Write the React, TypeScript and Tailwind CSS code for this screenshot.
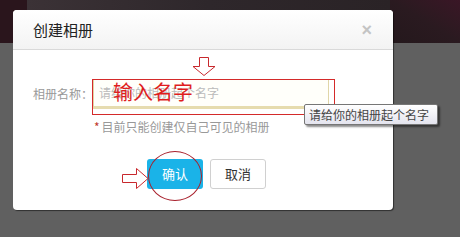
import React from "react";

const cjk = { fontFamily: '"Noto Sans CJK SC", "Liberation Sans", sans-serif' };

// 背景ページ（暗い上帯 + グレーのマスク）
function Backdrop() {
  return (
    <div className="flex h-[237px] w-[460px] flex-col">
      <div className="flex h-[43px] w-full">
        <div className="h-full w-[27px] bg-[#2a151c]" />
        <div className="h-full flex-1 bg-gradient-to-r from-[#3b3236] via-[#2e272b] to-[#2a2326]" />
        <div className="h-full w-[70px] bg-gradient-to-bl from-[#3a1626] via-[#2a1a20] to-[#24181c]" />
      </div>
      <div className="w-full flex-1 bg-[#606060]" />
    </div>
  );
}

function DownArrow() {
  return (
    <svg width="24" height="19" viewBox="0 0 24 19" className="absolute left-[192px] top-[57px]">
      <path d="M7.5 0.5 H16.5 V9.5 H23 L12 18.5 L1 9.5 H7.5 Z" fill="#fff" stroke="#c8282d" strokeWidth="1" />
    </svg>
  );
}

function RightArrow() {
  return (
    <svg width="27" height="21" viewBox="0 0 27 21" className="absolute left-[122px] top-[168px]">
      <path d="M0.5 6.5 H14.5 V0.5 L26 10.5 L14.5 20.5 V14.5 H0.5 Z" fill="#fff" stroke="#c8282d" strokeWidth="1" />
    </svg>
  );
}

export default function App() {
  return (
    <div className="relative h-[237px] w-[460px] overflow-hidden" style={cjk}>
      <Backdrop />

      {/* ダイアログ */}
      <div className="absolute left-[13px] top-[10px] flex h-[200px] w-[380px] flex-col rounded-[4px] bg-white shadow-[1px_1px_1px_rgba(0,0,0,0.5)]">
        <div className="flex h-[40px] items-center justify-between rounded-t-[4px] border-b border-[#d9d9d9] bg-gradient-to-b from-white to-[#f3f3f3] pl-[20px] pr-[21px]">
          <span className="text-[15px] leading-none text-[#222]">创建相册</span>
          <span className="text-[18px] font-bold leading-none text-[#c4c4c4]" style={{ fontFamily: '"Liberation Sans", sans-serif' }}>
            ×
          </span>
        </div>

        <div className="flex flex-1 flex-col pl-[20px] pt-[29px]">
          <div className="flex items-center">
            <span className="w-[60px] text-[12px] text-[#999]">相册名称：</span>
            <div className="flex h-[30px] w-[236px] items-center border border-[#e0d6a8] border-b-[3px] border-b-[#e6dcae] bg-[#fffffa] pl-[5px] text-[12px] text-[#bbb]">
              请给你的相册起个名字
            </div>
          </div>
          <div className="ml-[61px] mt-[12px] flex items-center text-[12px] leading-none text-[#999]">
            <span className="mr-[2px] text-[#c0392b]">*</span>
            <span>目前只能创建仅自己可见的相册</span>
          </div>
          <div className="ml-[114px] mt-[26px] flex gap-[7px]">
            <button className="h-[30px] w-[56px] rounded-[3px] bg-[#1ab3e8] text-[13px] text-white">确认</button>
            <button className="h-[30px] w-[56px] rounded-[3px] border border-[#d0d0d0] bg-white text-[13px] text-[#333]">取消</button>
          </div>
        </div>
      </div>

      {/* 注釈 */}
      <div className="absolute left-[92px] top-[79px] h-[36px] w-[243px] border border-[#d42a2a]" />
      <span className="absolute left-[113px] top-[79px] text-[20px] leading-[26px] text-[#e01e1e]">输入名字</span>
      <DownArrow />
      <RightArrow />
      <div className="absolute left-[148px] top-[151px] h-[50px] w-[54px] rounded-[50%] border border-[#a8202c]" />

      {/* ツールチップ */}
      <div className="absolute left-[304px] top-[104px] flex h-[21px] w-[134px] items-center rounded-[2px] border border-[#767676] bg-gradient-to-b from-white to-[#e4e4ee] pl-[4px] text-[12px] leading-none text-[#444] shadow-[2px_2px_2px_rgba(0,0,0,0.45)]">
        请给你的相册起个名字
      </div>
    </div>
  );
}
